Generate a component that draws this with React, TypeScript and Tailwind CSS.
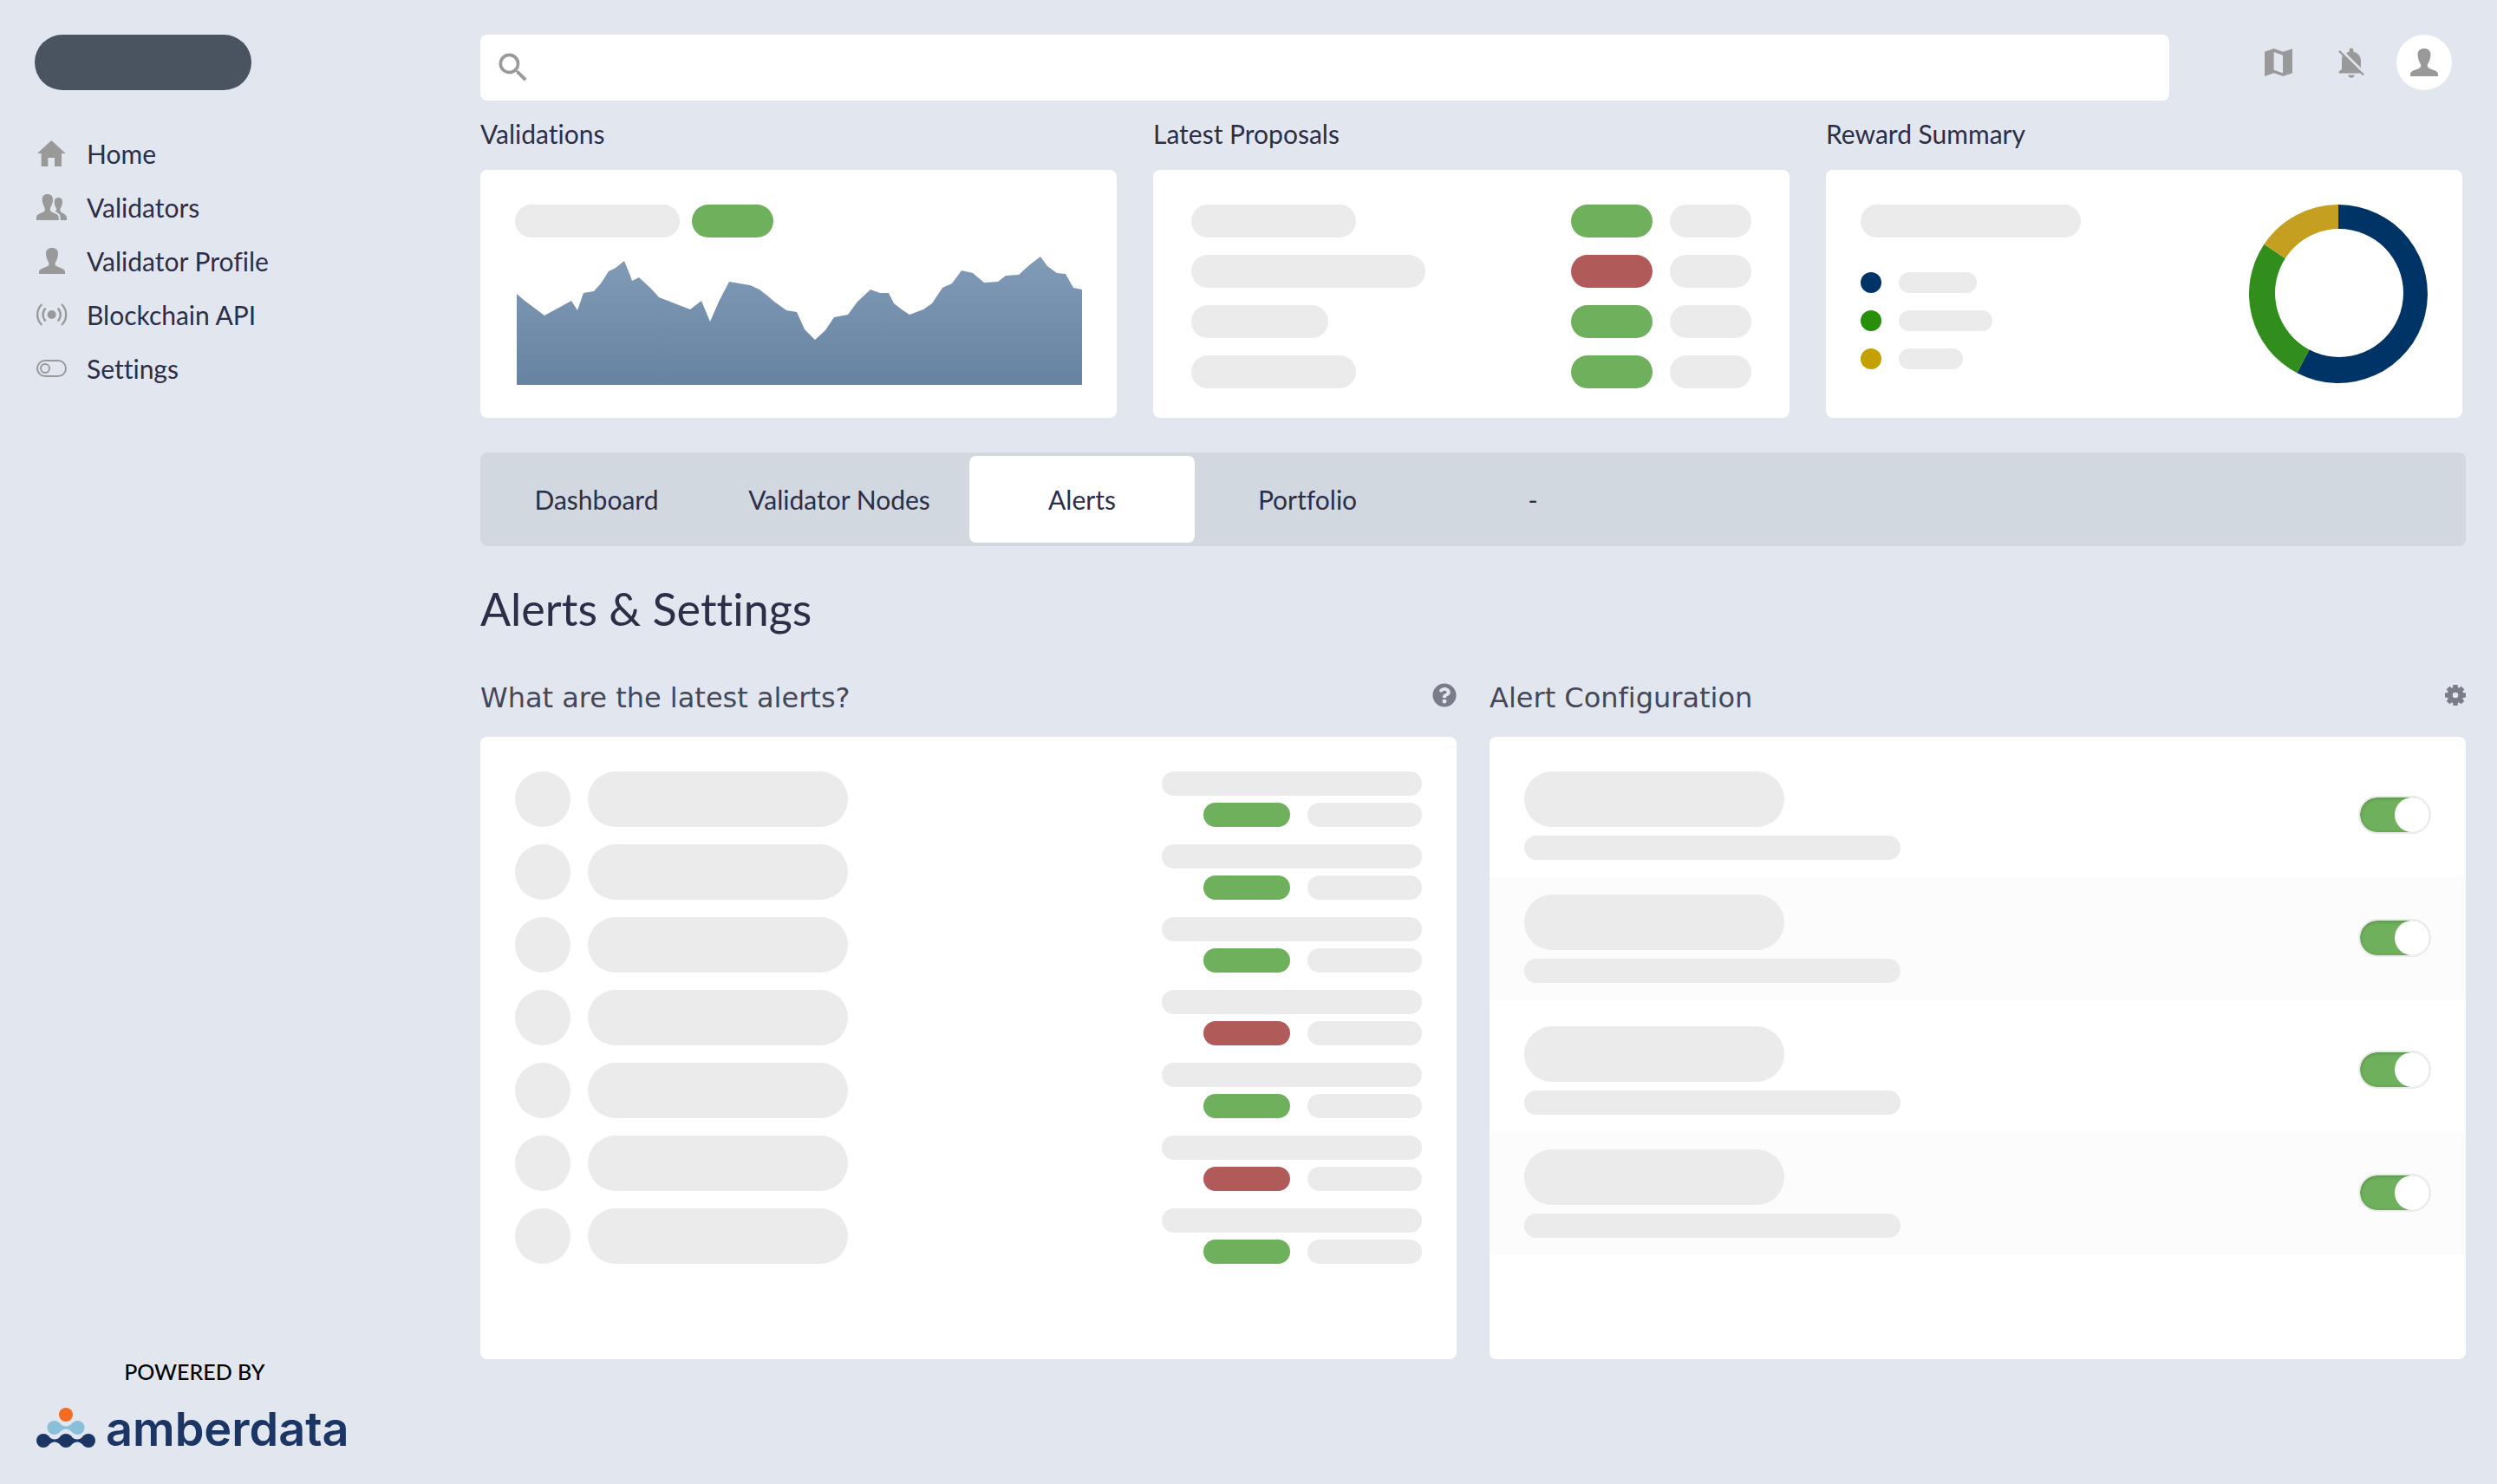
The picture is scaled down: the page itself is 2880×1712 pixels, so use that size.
import { useState, type ReactNode } from "react";
import { MdSearch } from "react-icons/md";
import { FaQuestionCircle } from "react-icons/fa";
import { clsx } from "clsx";

/* ---------- icons ---------- */

const PERSON =
  "M54 9C41 9 33 16 33 28C33 42 38 53 43 60C44 67 43 70 38 73C28 78 9 81 9 92V99H99V92C99 81 80 78 70 73C65 70 64 67 65 60C70 53 75 42 75 28C75 16 67 9 54 9Z";

function NavIcon({ children }: { children: ReactNode }) {
  return (
    <svg viewBox="0 0 108 108" className="size-9 shrink-0" fill="currentColor" aria-hidden="true">
      {children}
    </svg>
  );
}

const HomeIcon = () => (
  <NavIcon>
    <path d="M52 9L3 54H17V99H40V69H63V99H87V54H101Z" />
  </NavIcon>
);

const PeopleIcon = () => (
  <NavIcon>
    <path d="M38 9C26 9 20 16 20 27C20 39 25 50 29 57C30 65 29 68 23 71C15 75 0 78 0 89V99H77V89C77 78 62 75 54 71C48 68 47 65 48 57C52 50 57 39 57 27C57 16 50 9 38 9Z" />
    <path d="M76 21C67 21 62 27 62 35C62 45 66 53 69 58C70 64 69 67 64 68C74 73 83 77 83 89V99H105V90C105 81 95 77 87 73C82 70 82 65 83 58C87 53 90 45 90 35C90 27 85 21 76 21Z" />
  </NavIcon>
);

const PersonIcon = () => (
  <NavIcon>
    <path d={PERSON} />
  </NavIcon>
);

const BroadcastIcon = () => (
  <NavIcon>
    <circle cx="53" cy="54" r="15" />
    <g fill="none" stroke="currentColor" strokeWidth="7">
      <path d="M32 32A30.500 30.500 0 0 0 32 76" />
      <path d="M74 32A30.500 30.500 0 0 1 74 76" />
      <path d="M19 18A49.500 49.500 0 0 0 19 90" />
      <path d="M87 18A49.500 49.500 0 0 1 87 90" />
    </g>
  </NavIcon>
);

const ToggleIcon = () => (
  <NavIcon>
    <g fill="none" stroke="currentColor" strokeWidth="6">
      <rect x="3" y="27" width="99" height="54" rx="27" />
      <circle cx="30" cy="54" r="15" />
    </g>
  </NavIcon>
);

const MapIcon = () => (
  <svg viewBox="0 0 96 96" className="size-8" fill="currentColor" fillRule="evenodd" aria-hidden="true">
    <path d="M0 11L32 0L64 11L96 1V85L64 96L32 85L0 96ZM32 12V74L63 85V23Z" />
  </svg>
);

const BellOffIcon = () => (
  <svg viewBox="0 0 90 104" className="h-[35px] w-[30px]" fill="currentColor" aria-hidden="true">
    <path d="M15 24C12 32 12 40 12 50V74L2 83V88H82Z" />
    <path d="M27 19C31 16 35 14 38 13V8A7 7 0 0 1 52 8V13C68 17 78 30 78 45V69Z" />
    <path d="M34 94H56C55 100 51 104 45 104S35 100 34 94Z" />
    <path d="M3 11L87 94" fill="none" stroke="currentColor" strokeWidth="7" />
  </svg>
);

const GearIcon = () => (
  <svg viewBox="-12 -12 24 24" className="size-6" aria-hidden="true">
    <circle r="6.300" fill="none" stroke="currentColor" strokeWidth="6" />
    {[0, 45, 90, 135].map((angle) => (
      <path
        key={angle}
        d="M-2.600 -12H2.600L3 -8H-3ZM-2.600 12H2.600L3 8H-3Z"
        transform={`rotate(${angle})`}
        fill="currentColor"
      />
    ))}
  </svg>
);

const LogoMark = () => (
  <svg viewBox="0 0 68 46" className="mb-1 h-[46px] w-[68px]" aria-hidden="true">
    <circle cx="34" cy="8" r="8" fill="#f36c24" />
    <g fill="#89bfd9">
      <circle cx="20.500" cy="23" r="8" />
      <circle cx="47.500" cy="23" r="8" />
      <path d="M26 17Q34 26 42 17V29Q34 20 26 29Z" />
    </g>
    <g fill="#1b3564">
      <circle cx="8" cy="38" r="8" />
      <circle cx="34" cy="38" r="8" />
      <circle cx="60" cy="38" r="8" />
      <path d="M13 32Q21 41 29 32V44Q21 35 13 44Z" />
      <path d="M39 32Q47 41 55 32V44Q47 35 39 44Z" />
    </g>
  </svg>
);

/* ---------- building blocks ---------- */

function Pill({ className }: { className: string }) {
  return <div className={clsx("rounded-full", className)} />;
}

function SummaryCard({ title, children }: { title: string; children: ReactNode }) {
  return (
    <section>
      <h2 className="flex h-20 items-center pb-1 text-[30px]">{title}</h2>
      <div className="h-[286px] rounded-lg bg-white py-10">{children}</div>
    </section>
  );
}

function Panel({ title, action, children }: { title: string; action: ReactNode; children: ReactNode }) {
  return (
    <section className="flex flex-col">
      <div className="flex h-[90px] items-center justify-between">
        <h2 className="font-['DejaVu_Sans',sans-serif] text-[32px] text-[#454759]">{title}</h2>
        {action}
      </div>
      <div className="min-h-[718px] flex-1 overflow-hidden rounded-lg bg-white">{children}</div>
    </section>
  );
}

/* ---------- data ---------- */

const NAV = [
  { label: "Home", icon: <HomeIcon /> },
  { label: "Validators", icon: <PeopleIcon /> },
  { label: "Validator Profile", icon: <PersonIcon /> },
  { label: "Blockchain API", icon: <BroadcastIcon /> },
  { label: "Settings", icon: <ToggleIcon /> },
];

const TABS = ["Dashboard", "Validator Nodes", "Alerts", "Portfolio", "-"];

const GREEN = "bg-[#6eb05c]";
const RED = "bg-[#b05b59]";

const PROPOSALS = [
  { width: "w-[190px]", status: GREEN },
  { width: "w-[270px]", status: RED },
  { width: "w-[158px]", status: GREEN },
  { width: "w-[190px]", status: GREEN },
];

const LEGEND = [
  { dot: "bg-[#003466]", width: "w-[90px]" },
  { dot: "bg-[#288f0a]", width: "w-[108px]" },
  { dot: "bg-[#c4a000]", width: "w-[74px]" },
];

const ALERTS = [GREEN, GREEN, GREEN, RED, GREEN, RED, GREEN];

const CONFIG = ["pt-10", "bg-[#fcfcfc] pt-5", "pt-[30px]", "bg-[#fcfcfc] pt-5"];

const VALIDATIONS =
  "0,43 8,50 32,68 63,51 70,62 77,42 89,40 97,31 106,17 114,13 124,5 131,22 133,28 141,24 155,37 164,47 200,61 213,51 223,75 234,50 245,29 257,31 269,33 280,38 289,45 297,52 311,62 323,64 332,84 344,96 356,85 366,70 382,67 393,52 408,38 419,42 429,42 435,54 444,61 453,67 469,61 479,54 491,36 502,31 513,16 526,19 539,30 555,29 564,22 579,21 591,10 604,0 612,11 623,19 633,20 642,36 652,38 652,148 0,148";

/* ---------- page ---------- */

export default function App() {
  const [tab, setTab] = useState("Alerts");

  return (
    <div className="flex min-h-screen bg-[#e2e7ef] font-['Lato',sans-serif] text-[#2c2e48] [font-variant-ligatures:none]">
      <aside className="flex w-[554px] shrink-0 flex-col items-start pt-10 pb-8 pl-10">
        <Pill className="h-16 w-[250px] bg-[#4a5460]" />
        <nav className="mt-[42px] pl-0.5">
          {NAV.map(({ label, icon }) => (
            <a key={label} href="#" className="flex h-[62px] items-center gap-[22px] text-[30px] text-[#999]">
              {icon}
              <span className="text-[#2c2e48]">{label}</span>
            </a>
          ))}
        </nav>
        <footer className="mt-auto flex flex-col items-center pl-0.5">
          <p className="pl-1 text-[25px] leading-8 font-medium text-black">POWERED BY</p>
          <a href="#" className="mt-5 flex h-[62px] items-center gap-3">
            <LogoMark />
            <span className="font-['Inter',sans-serif] text-[54px] leading-[62px] font-semibold text-[#1b3564]">
              amberdata
            </span>
          </a>
        </footer>
      </aside>

      <main className="min-w-0 flex-1 pt-10 pr-9 pb-10">
        <header className="flex items-start">
          <label className="flex h-[76px] flex-1 items-center rounded-lg bg-white pl-4 text-[#999]">
            <MdSearch className="size-11" aria-hidden="true" />
            <input
              type="search"
              aria-label="Search"
              className="h-full flex-1 px-4 text-[30px] text-[#2c2e48] outline-none"
            />
          </label>
          <div className="mr-4 ml-[110px] flex h-16 items-center text-[#999]">
            <button type="button" aria-label="Map">
              <MapIcon />
            </button>
            <button type="button" aria-label="Notifications off" className="ml-[53px]">
              <BellOffIcon />
            </button>
            <button
              type="button"
              aria-label="Account"
              className="ml-[37px] flex size-16 items-center justify-center rounded-full bg-white"
            >
              <svg viewBox="9 9 90 90" className="size-8" fill="currentColor" aria-hidden="true">
                <path d={PERSON} />
              </svg>
            </button>
          </div>
        </header>

        <div className="grid grid-cols-3 gap-[42px] pr-1">
          <SummaryCard title="Validations">
            <div className="px-10">
              <div className="flex gap-3.5">
                <Pill className="h-[38px] w-[190px] bg-[#ebebeb]" />
                <Pill className={clsx("h-[38px] w-[94px]", GREEN)} />
              </div>
              <svg
                viewBox="0 0 652 148"
                preserveAspectRatio="none"
                className="mt-[22px] h-[148px] w-full pl-0.5"
                role="img"
                aria-label="Validations over time"
              >
                <defs>
                  <linearGradient id="area" x1="0" y1="0" x2="0" y2="1">
                    <stop offset="0" stopColor="#819bb7" />
                    <stop offset="1" stopColor="#6683a1" />
                  </linearGradient>
                </defs>
                <polygon points={VALIDATIONS} fill="url(#area)" />
              </svg>
            </div>
          </SummaryCard>

          <SummaryCard title="Latest Proposals">
            <ul className="flex flex-col gap-5 px-11">
              {PROPOSALS.map(({ width, status }, i) => (
                <li key={i} className="flex gap-5">
                  <Pill className={clsx("mr-auto h-[38px] bg-[#ebebeb]", width)} />
                  <Pill className={clsx("h-[38px] w-[94px]", status)} />
                  <Pill className="h-[38px] w-[94px] bg-[#ebebeb]" />
                </li>
              ))}
            </ul>
          </SummaryCard>

          <SummaryCard title="Reward Summary">
            <div className="flex justify-between px-10">
              <div>
                <Pill className="h-[38px] w-[254px] bg-[#ebebeb]" />
                <ul className="mt-10 flex flex-col gap-5">
                  {LEGEND.map(({ dot, width }) => (
                    <li key={dot} className="flex gap-5">
                      <Pill className={clsx("size-6", dot)} />
                      <Pill className={clsx("h-6 bg-[#ebebeb]", width)} />
                    </li>
                  ))}
                </ul>
              </div>
              <svg viewBox="-103 -103 206 206" className="size-[206px]" role="img" aria-label="Reward split">
                <path d="M0 0V-103A103 103 0 1 1 -47.700 91.300Z" fill="#003466" />
                <path d="M0 0L-47.700 91.300A103 103 0 0 1 -85.600 -57.300Z" fill="#328e1c" />
                <path d="M0 0L-85.600 -57.300A103 103 0 0 1 0 -103Z" fill="#c49f20" />
                <circle cx="1" cy="-1" r="74" fill="#fff" />
              </svg>
            </div>
          </SummaryCard>
        </div>

        <div role="tablist" className="mt-10 flex h-[108px] rounded-lg bg-[#d1d8e0] p-1">
          {TABS.map((name) => (
            <button
              key={name}
              type="button"
              role="tab"
              aria-selected={tab === name}
              onClick={() => setTab(name)}
              className={clsx(
                "rounded-lg text-[30px]",
                name === "Validator Nodes" ? "w-[300px]" : "w-[260px]",
                tab === name && "bg-white",
              )}
            >
              {name}
            </button>
          ))}
        </div>

        <h1 className="mt-10 text-[52px] leading-[64px]">Alerts &amp; Settings</h1>

        <div className="mt-[26px] grid grid-cols-2 gap-[38px]">
          <Panel
            title="What are the latest alerts?"
            action={
              <button type="button" aria-label="Help" className="mb-1.5 text-[#7b7c89]">
                <FaQuestionCircle className="size-7" />
              </button>
            }
          >
            <ul className="flex flex-col gap-5 p-10">
              {ALERTS.map((status, i) => (
                <li key={i} className="flex gap-5">
                  <Pill className="size-16 bg-[#ebebeb]" />
                  <Pill className="h-16 w-[300px] bg-[#ebebeb]" />
                  <div className="ml-auto flex w-[300px] flex-col gap-2">
                    <Pill className="h-7 bg-[#ebebeb]" />
                    <div className="flex justify-end gap-5">
                      <Pill className={clsx("h-7 w-[100px]", status)} />
                      <Pill className="h-7 w-[132px] bg-[#ebebeb]" />
                    </div>
                  </div>
                </li>
              ))}
            </ul>
          </Panel>

          <Panel
            title="Alert Configuration"
            action={
              <button type="button" aria-label="Configure" className="mb-1.5 text-[#7b7c89]">
                <GearIcon />
              </button>
            }
          >
            <ul>
              {CONFIG.map((row, i) => (
                <li key={i} className={clsx("flex items-center justify-between px-10 pb-5", row)}>
                  <div>
                    <Pill className="h-16 w-[300px] bg-[#ebebeb]" />
                    <Pill className="mt-2.5 h-7 w-[434px] bg-[#ebebeb]" />
                  </div>
                  <input
                    type="checkbox"
                    role="switch"
                    defaultChecked
                    aria-label={`Alert ${i + 1}`}
                    className="mb-0.5 h-11 w-[84px] appearance-none rounded-full border-2 border-[#ebebeb] bg-[#c8ccd2] bg-clip-padding shadow-[inset_0_1px_4px_rgba(0,0,0,0.2)] before:block before:size-10 before:rounded-full before:bg-white before:content-[''] checked:bg-[#6eb05c] checked:before:translate-x-10"
                  />
                </li>
              ))}
            </ul>
          </Panel>
        </div>
      </main>
    </div>
  );
}
